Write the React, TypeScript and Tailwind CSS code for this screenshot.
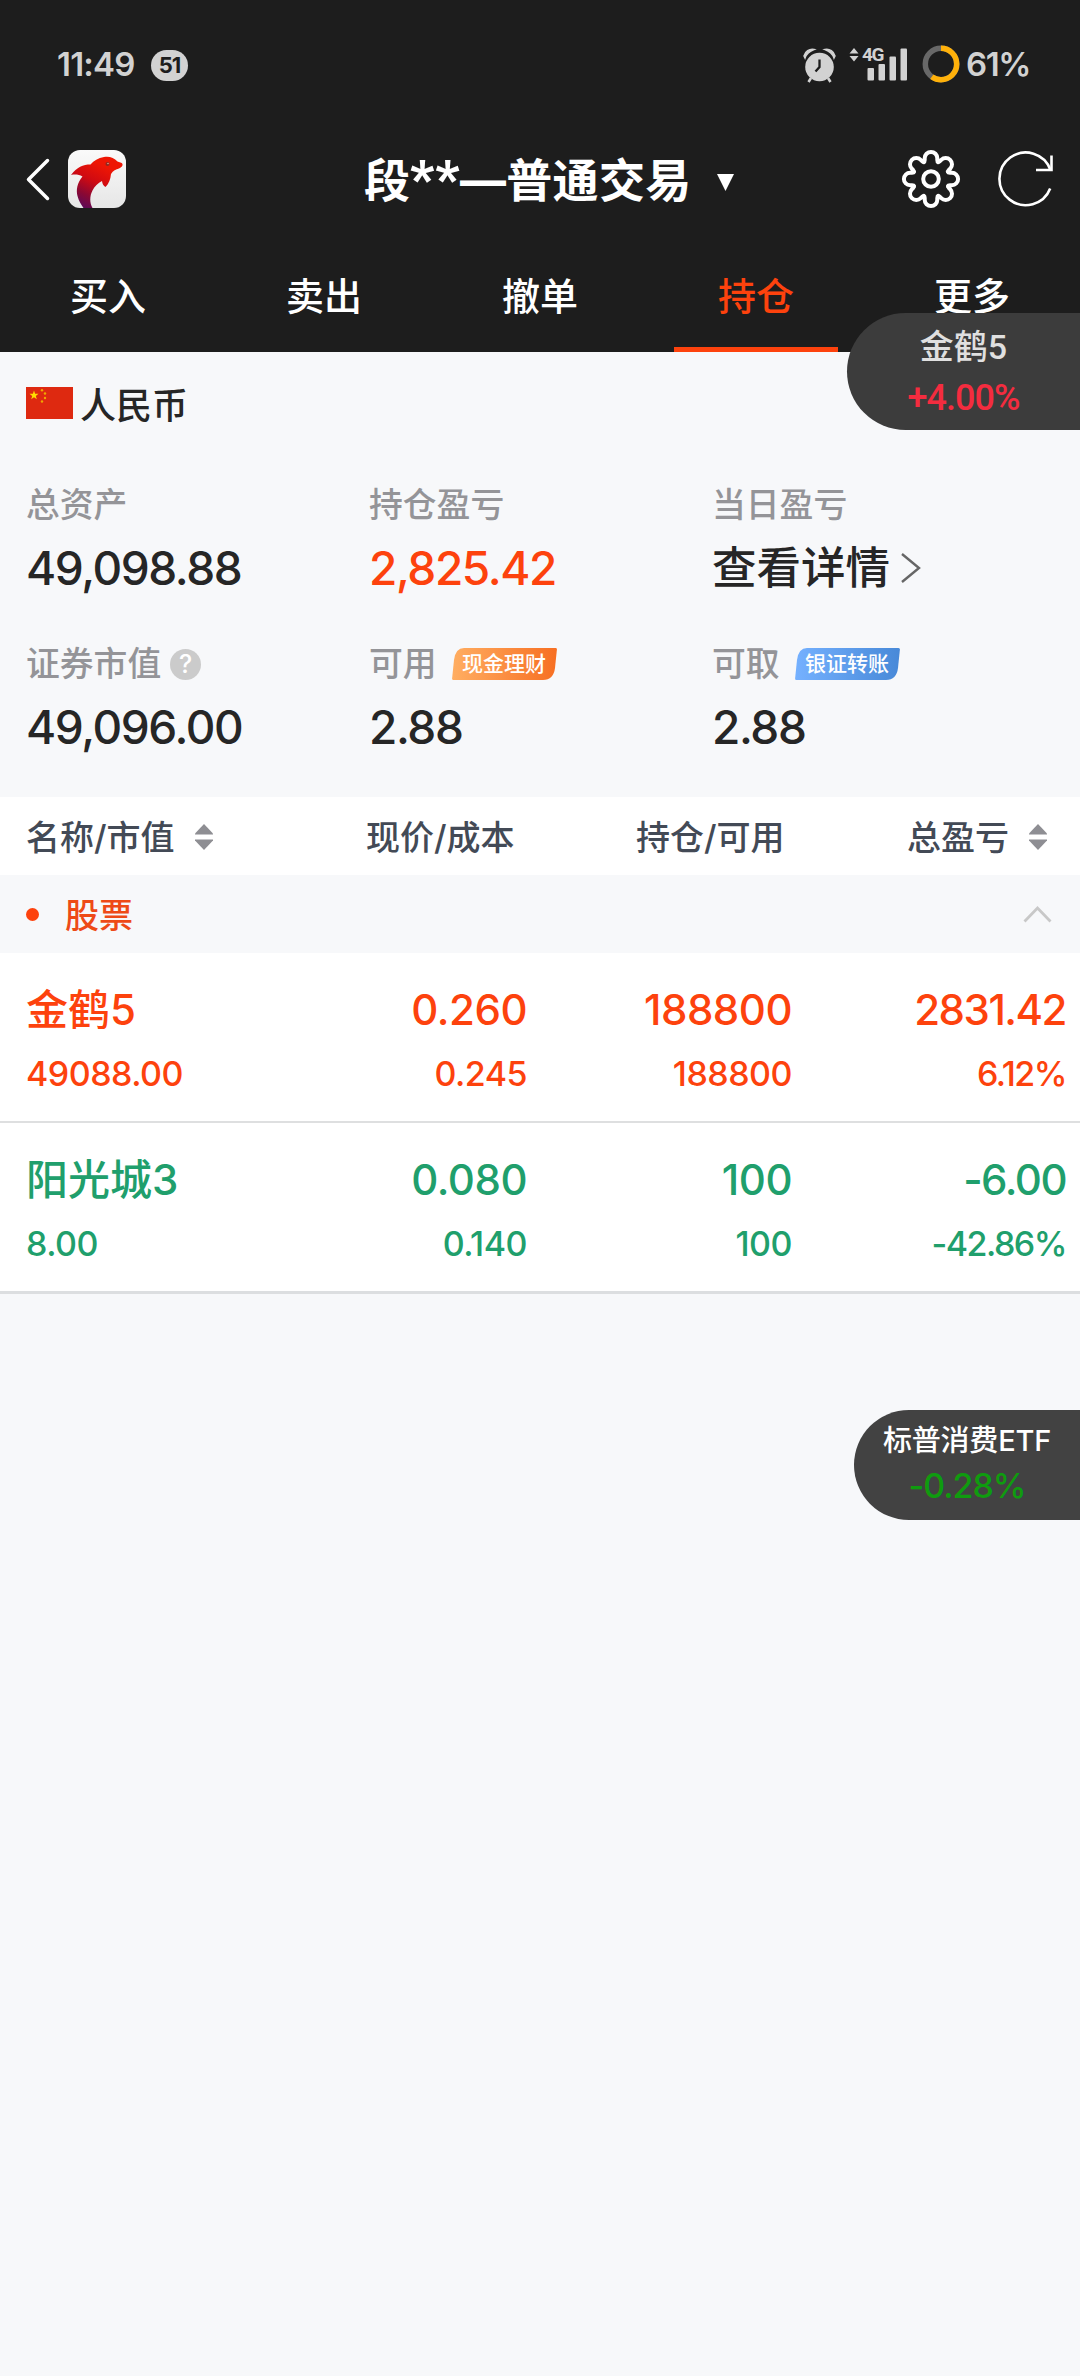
import { clsx } from 'clsx'

interface Holding {
  name: string
  value: string
  price: string
  cost: string
  amount: string
  available: string
  profit: string
  percent: string
  up: boolean
}

const tabs = ['买入', '卖出', '撤单', '持仓', '更多']

const holdings: Holding[] = [
  {
    name: '金鹤5',
    value: '49088.00',
    price: '0.260',
    cost: '0.245',
    amount: '188800',
    available: '188800',
    profit: '2831.42',
    percent: '6.12%',
    up: true,
  },
  {
    name: '阳光城3',
    value: '8.00',
    price: '0.080',
    cost: '0.140',
    amount: '100',
    available: '100',
    profit: '-6.00',
    percent: '-42.86%',
    up: false,
  },
]

// Eight rounded teeth around the center
function gearPath() {
  const point = (r: number, offset: number, angle: number) => {
    const x = r * Math.cos(angle) - offset * Math.sin(angle)
    const y = r * Math.sin(angle) + offset * Math.cos(angle)
    return `${(30 + x).toFixed(2)} ${(30 + y).toFixed(2)}`
  }
  let d = ''
  for (let i = 0; i < 8; i++) {
    const a = (i * Math.PI) / 4
    const next = a + Math.PI / 4
    d += i === 0 ? `M${point(20.8, -6.3, a)}` : ''
    d += `A6.3 6.3 0 0 1 ${point(20.8, 6.3, a)}`
    d += `L${point(19, 6.3, a)}Q${point(15.4, 6.3, a)} ${point(19, -6.3, next)}L${point(20.8, -6.3, next)}`
  }
  return d + 'Z'
}

function StatusBar() {
  return (
    <div className="flex h-[130px] items-center pl-[57px] pr-[50px] text-[#d2d2d2]">
      <span className="w-[94px] text-[33px] font-semibold tracking-[-0.8px]">11:49</span>
      <span className="flex h-[31px] w-[37px] items-center justify-center rounded-full bg-[#d2d2d2] text-[22px] font-bold tracking-[-1px] text-[#1d1d1d]">
        51
      </span>
      <svg className="ml-auto" width="34" height="36" viewBox="0 0 34 36" fill="#d2d2d2">
        <circle cx="16.5" cy="20" r="14.3" />
        <path d="M1 9A8.500 8.500 0 0 1 11 2.500Q4 5 2 11Z" stroke="#d2d2d2" strokeWidth="1.500" />
        <path d="M32 9A8.500 8.500 0 0 0 22 2.500Q29 5 31 11Z" stroke="#d2d2d2" strokeWidth="1.500" />
        <path d="M8 31L5.500 35M25 31L27.500 35" stroke="#d2d2d2" strokeWidth="2.600" />
        <path d="M16.500 12.500V20L12.500 24.500" stroke="#1d1d1d" strokeWidth="2.300" fill="none" />
      </svg>
      <div className="relative ml-[12px] h-[34px] w-[60px]">
        <svg width="60" height="34" viewBox="0 0 60 34" fill="#d2d2d2">
          <path d="M5 0L9.500 5.500H.5ZM5 13.500L9.500 8H.5Z" />
          <rect x="18.500" y="20" width="6.500" height="12.500" rx="1" />
          <rect x="29.500" y="16" width="6.500" height="16.500" rx="1" />
          <rect x="40.500" y="8.500" width="6.500" height="24" rx="1" />
          <rect x="51.500" y="0.500" width="6.500" height="32" rx="1" />
        </svg>
        <span className="absolute left-[13px] top-[-1px] font-[Roboto] text-[19px] font-bold leading-[16px] tracking-[-1.500px]">
          4G
        </span>
      </div>
      <svg className="ml-[13px] -mt-[2px]" width="38" height="38" viewBox="0 0 38 38" fill="none" strokeWidth="5.500">
        <circle cx="19" cy="19" r="15.700" stroke="#686868" />
        <circle
          cx="19"
          cy="19"
          r="15.700"
          stroke="#ffb10a"
          pathLength="100"
          strokeDasharray="60 40"
          transform="rotate(-90 19 19)"
        />
      </svg>
      <span className="ml-[6px] text-[33px] font-semibold tracking-[-1.400px]">61%</span>
    </div>
  )
}

function Logo() {
  return (
    <svg width="58" height="58" viewBox="0 0 58 58">
      <defs>
        <linearGradient id="plate" x1="0" y1="0" x2="0" y2="1">
          <stop offset="0" stopColor="#fafafa" />
          <stop offset="1" stopColor="#e6e6e6" />
        </linearGradient>
        <linearGradient id="dolphin" x1="0.7" y1="0.1" x2="0.25" y2="1">
          <stop offset="0.1" stopColor="#ee1604" />
          <stop offset="0.45" stopColor="#cf0a12" />
          <stop offset="0.75" stopColor="#8a0833" />
          <stop offset="1" stopColor="#5c0a58" />
        </linearGradient>
      </defs>
      <rect width="58" height="58" rx="12" fill="url(#plate)" />
      <path
        d="M54.500 14C54 12.500 51 12.500 49.500 11.500C46 7.500 41 6 36 7C30 8 26 10.500 22.500 14.500C15 14.500 9 17 3 25C7 24 11 24.500 14.500 26.500C9 33 8 40 9.500 46C10.800 51 13 54.500 15.500 58H24.500C21.500 53 21.500 46 24.500 40.500C26.500 36.500 30 33 34 31C34.300 34 35.500 36 37.500 37C41 33.500 42.500 29 43 24C45 20.500 48 19.500 51 18.500C53.500 17.500 55 15.500 54.500 14Z"
        fill="url(#dolphin)"
      />
      <circle cx="39.500" cy="14" r="2" fill="#8d2a20" />
      <circle cx="40" cy="13.500" r="0.800" fill="#e0a090" />
    </svg>
  )
}

function Header() {
  return (
    <div className="relative flex h-[100px] items-center justify-between pl-[25px] pr-[25px]">
      <div className="flex items-center">
        <svg width="26" height="44" viewBox="0 0 26 44" fill="none">
          <path d="M22.500 2.500L3.500 21.500L22.500 40.500" stroke="#fff" strokeWidth="3.500" strokeLinecap="round" strokeLinejoin="round" />
        </svg>
        <div className="-mt-[2px] ml-[17px]">
          <Logo />
        </div>
      </div>
      <h1 className="absolute left-[364px] top-[20px] flex h-[60px] items-center text-[46px] font-bold text-white">
        <span>段</span>
        <span className="w-[50px] font-[Roboto] text-[52px] font-black tracking-[1px]">**</span>
        <span className="tracking-[0.300px]">—普通交易</span>
        <svg className="ml-[25px] mt-[4px]" width="17" height="17" viewBox="0 0 17 17">
          <path d="M0 0H17L8.500 17Z" fill="#fff" />
        </svg>
      </h1>
      <div className="-mt-[2px] flex items-center gap-[36px]">
        <svg width="60" height="60" viewBox="0 0 60 60" fill="none" stroke="#fff" strokeWidth="4" strokeLinejoin="round">
          <path d={gearPath()} />
          <circle cx="30" cy="30" r="7.800" />
        </svg>
        <svg width="58" height="58" viewBox="0 0 58 58" fill="none" stroke="#fff" strokeWidth="2.600">
          <path d="M53.200 38.500A26.300 26.300 0 1 1 53.500 20" />
          <path d="M54.500 5.500V20H39" />
        </svg>
      </div>
    </div>
  )
}

function SortIcon() {
  return (
    <svg width="18" height="28" viewBox="0 0 18 28" fill="#8e8e93">
      <path d="M9 1L18 10.500V11.500H0V10.500Z" />
      <path d="M9 27L18 17.500V16.500H0V17.500Z" />
    </svg>
  )
}

function Badge({ text, id, from, to }: { text: string; id: string; from: string; to: string }) {
  return (
    <span className="relative ml-[15px] flex h-[32px] w-[105px] items-center justify-center text-[21px] leading-[32px] text-white">
      <svg className="absolute inset-0" width="105" height="32" viewBox="0 0 105 32">
        <defs>
          <linearGradient id={id}>
            <stop offset="0" stopColor={from} />
            <stop offset="1" stopColor={to} />
          </linearGradient>
        </defs>
        <path d="M12 0H103.500Q105 0 104.900 1.500L103 20Q101.500 32 91 32H1.500Q0 32 .1 30.500L2 12Q3.500 0 12 0Z" fill={`url(#${id})`} />
      </svg>
      <span className="relative">{text}</span>
    </span>
  )
}

function Flag() {
  return (
    <svg width="47" height="32" viewBox="0 0 47 32">
      <rect width="47" height="32" fill="#de2910" />
      <path d="M8 3.500L9.100 6.800H12.500L9.800 8.900L10.800 12.200L8 10.200L5.200 12.200L6.200 8.900L3.500 6.800H6.900Z" fill="#ffde00" />
      <g fill="#f0a800">
        <circle cx="16" cy="3.300" r="1.200" />
        <circle cx="19" cy="6.500" r="1.200" />
        <circle cx="19" cy="11" r="1.200" />
        <circle cx="16" cy="14.500" r="1.200" />
      </g>
    </svg>
  )
}

const labelClass = 'flex h-[44px] items-center text-[33.800px] font-medium leading-[44px] text-[#949498]'
const valueClass = 'mt-[17px] flex h-[48px] items-center text-[46px] font-medium leading-[48px] tracking-[-1.400px]'

function Summary() {
  return (
    <section className="h-[445px] text-[#262626]">
      <div className="flex h-[106px] items-center pl-[26px]">
        <div className="-mt-[4px]">
          <Flag />
        </div>
        <span className="ml-[7px] mt-[2px] text-[36px] font-medium">人民币</span>
      </div>
      <div className="mt-[25px] grid grid-cols-[343px_343px_1fr] grid-rows-[159px_155px] pl-[26px]">
        <div>
          <div className={labelClass}>总资产</div>
          <div className={valueClass}>49,098.88</div>
        </div>
        <div>
          <div className={labelClass}>持仓盈亏</div>
          <div className={clsx(valueClass, 'text-[#fd420d]')}>2,825.42</div>
        </div>
        <div>
          <div className={labelClass}>当日盈亏</div>
          <div className="mt-[17px] flex h-[48px] items-center text-[44.500px] font-medium leading-[48px]">
            查看详情
            <svg className="ml-[10px]" width="22" height="32" viewBox="0 0 22 32" fill="none">
              <path d="M2 2L19 16L2 30" stroke="#666" strokeWidth="2.400" />
            </svg>
          </div>
        </div>
        <div>
          <div className={labelClass}>
            证券市值
            <span className="ml-[9px] flex h-[31px] w-[31px] items-center justify-center rounded-full bg-[#cbcbcb] text-[25px] leading-[31px] text-white">
              ?
            </span>
          </div>
          <div className={valueClass}>49,096.00</div>
        </div>
        <div>
          <div className={labelClass}>
            可用
            <Badge text="现金理财" id="cash" from="#ffae62" to="#f76f22" />
          </div>
          <div className={valueClass}>2.88</div>
        </div>
        <div>
          <div className={labelClass}>
            可取
            <Badge text="银证转账" id="bank" from="#75b1ff" to="#4889d8" />
          </div>
          <div className={valueClass}>2.88</div>
        </div>
      </div>
    </section>
  )
}

function HoldingRow({ item, last }: { item: Holding; last: boolean }) {
  const columns = [
    [item.name, item.value],
    [item.price, item.cost],
    [item.amount, item.available],
    [item.profit, item.percent],
  ]
  return (
    <div
      className={clsx(
        'grid grid-cols-[240px_261px_265px_274px] bg-white pl-[26px] pt-[31px] font-medium',
        item.up ? 'text-[#fd420d]' : 'text-[#209f6c]',
        last ? 'h-[171px] border-b-[3px] border-[#dcdee0]' : 'h-[170px] border-b-2 border-[#dedfe0]'
      )}
    >
      {columns.map(([top, bottom], i) => (
        <div
          key={i}
          className={clsx(
            'flex flex-col',
            i > 0 && 'items-end',
            i === 3 ? 'tracking-[-1.500px]' : 'tracking-[-0.500px]'
          )}
        >
          <span className={clsx('h-[52px] text-[42px] leading-[52px]', i === 0 && 'tracking-normal')}>{top}</span>
          <span className="mt-[16px] h-[44px] text-[34px] leading-[44px]">{bottom}</span>
        </div>
      ))}
    </div>
  )
}

export default function App() {
  return (
    <div className="relative h-[2376px] w-[1080px] overflow-hidden bg-[#f7f8fa] font-[Inter,'Noto_Sans_CJK_SC',sans-serif]">
      <header className="h-[352px] bg-[#1d1d1d]">
        <StatusBar />
        <Header />
        <nav className="grid h-[122px] grid-cols-5">
          {tabs.map(tab => (
            <div
              key={tab}
              className={clsx(
                'flex flex-col items-center justify-between pt-[44px] text-[38px] font-medium leading-[45px]',
                tab === '持仓' ? 'text-[#fd420d]' : 'text-white'
              )}
            >
              {tab}
              {tab === '持仓' && <div className="h-[5px] w-[164px] bg-[#fd420d]" />}
            </div>
          ))}
        </nav>
      </header>

      <Summary />

      <div className="grid h-[78px] grid-cols-[340px_270px_271px_199px] items-center bg-white pl-[26px] pt-[2px] text-[34px] font-medium text-[#434a56]">
        <div className="flex items-center gap-[20px]">
          名称/市值
          <SortIcon />
        </div>
        <div>现价/成本</div>
        <div>持仓/可用</div>
        <div className="flex items-center gap-[20px]">
          总盈亏
          <SortIcon />
        </div>
      </div>

      <div className="flex h-[78px] items-center pl-[26px] pr-[28px] text-[34px] font-medium text-[#ee4a17]">
        <span className="h-[13px] w-[13px] rounded-full bg-[#fd420d]" />
        <span className="ml-[26px] mt-[2px]">股票</span>
        <svg className="ml-auto" width="29" height="18" viewBox="0 0 29 18" fill="none">
          <path d="M1.500 16.500L14.500 3L27.500 16.500" stroke="#c8c8c8" strokeWidth="2.800" />
        </svg>
      </div>

      {holdings.map((item, i) => (
        <HoldingRow key={item.name} item={item} last={i === holdings.length - 1} />
      ))}

      {/* Floating quotes */}
      <div className="absolute right-0 top-[313px] flex h-[117px] w-[233px] flex-col items-center rounded-l-full bg-[#3c3c3c] pt-[10px] font-[Roboto,'Noto_Sans_CJK_SC',sans-serif]">
        <span className="h-[48px] text-[34px] font-medium leading-[48px] text-[#e0e0e0]">金鹤5</span>
        <span className="mt-[3px] h-[48px] text-[36px] font-medium leading-[48px] tracking-[-1px] text-[#f42c3f]">+4.00%</span>
      </div>
      <div className="absolute right-0 top-[1410px] flex h-[110px] w-[226px] flex-col items-center rounded-l-full bg-[#424242] pt-[11px]">
        <span className="h-[40px] text-[29px] font-medium leading-[40px] tracking-[-0.200px] text-white">标普消费ETF</span>
        <span className="mt-[5px] h-[40px] text-[34px] font-medium leading-[40px] tracking-[-1px] text-[#0f9b0f]">-0.28%</span>
      </div>
    </div>
  )
}
